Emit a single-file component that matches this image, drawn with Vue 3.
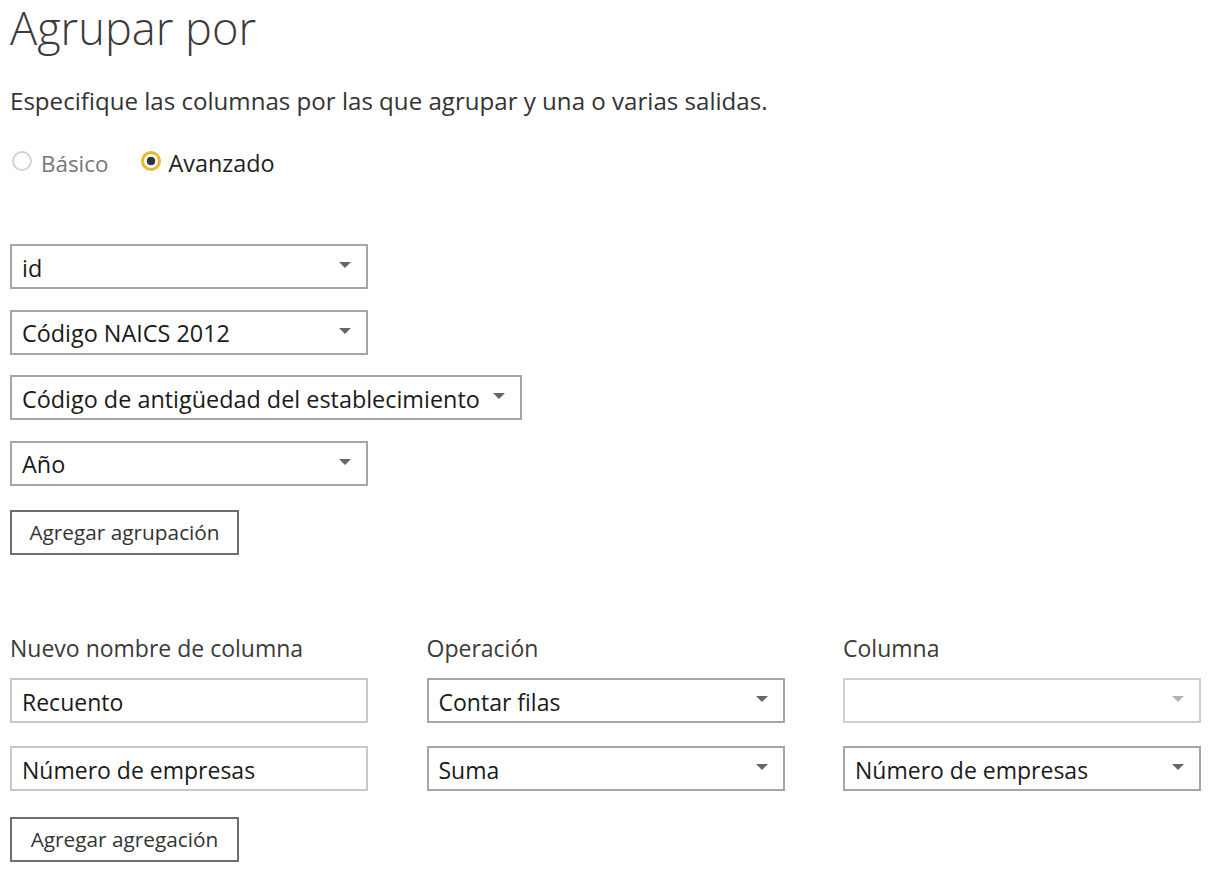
<template>
  <main class="page">
    <h1 class="title">Agrupar por</h1>
    <p class="subtitle">Especifique las columnas por las que agrupar y una o varias salidas.</p>

    <div class="mode">
      <label class="radio disabled">
        <span class="dot"></span>
        Básico
      </label>
      <label class="radio checked">
        <span class="dot"></span>
        Avanzado
      </label>
    </div>

    <div class="groups">
      <div
        v-for="item in groupings"
        :key="item"
        class="field select"
        :class="{ auto: item.length > 30 }"
      >
        <span>{{ item }}</span>
        <i class="caret"></i>
      </div>
      <button class="btn btn-group" type="button">Agregar agrupación</button>
    </div>

    <div class="aggregations">
      <div class="grid">
        <div class="label">Nuevo nombre de columna</div>
        <div class="label">Operación</div>
        <div class="label">Columna</div>

        <template v-for="row in rows" :key="row.name">
          <div class="field input">{{ row.name }}</div>
          <div class="field select"><span>{{ row.operation }}</span><i class="caret"></i></div>
          <div class="field select" :class="{ off: !row.column }">
            <span>{{ row.column }}</span>
            <i class="caret"></i>
          </div>
        </template>
      </div>
      <button class="btn btn-last" type="button">Agregar agregación</button>
    </div>
  </main>
</template>

<script setup>
const groupings = [
  'id',
  'Código NAICS 2012',
  'Código de antigüedad del establecimiento',
  'Año',
];

const rows = [
  { name: 'Recuento', operation: 'Contar filas', column: '' },
  { name: 'Número de empresas', operation: 'Suma', column: 'Número de empresas' },
];
</script>

<style>
body {
  background: #fff;
}
</style>

<style scoped>
.page {
  box-sizing: border-box;
  width: 1216px;
  height: 876px;
  padding: 0 15px 0 10px;
  font-family: "Open Sans", "Noto Sans", sans-serif;
  color: #1f1f1f;
}

.title {
  margin: 0;
  height: 56px;
  font-size: 45.2px;
  line-height: 56px;
  font-weight: 300;
  color: #3b3a39;
}

.subtitle {
  margin: 29px 0 0;
  font-size: 24.1px;
  line-height: 32px;
  color: #333;
}

.mode {
  display: flex;
  gap: 33px;
  margin-top: 30px;
  height: 32px;
  padding-left: 2px;
}

.radio {
  display: flex;
  align-items: center;
  gap: 9px;
  font-size: 22.4px;
}

.radio.disabled {
  color: #777;
}

.radio.checked {
  gap: 7px;
  font-size: 23.4px;
}

.dot {
  box-sizing: border-box;
  width: 20px;
  height: 20px;
  margin-top: -4px;
  border-radius: 50%;
  border: 2px solid #d2d2d2;
  background: #fff;
}

.checked .dot {
  border: 3px solid #e8b92f;
  background: radial-gradient(circle, #33343b 0 4px, #fff 4.6px);
}

.groups {
  display: flex;
  flex-direction: column;
  align-items: flex-start;
  gap: 20.5px;
  margin-top: 65px;
}

.groups .field {
  font-size: 23.4px;
}

.field {
  box-sizing: border-box;
  display: flex;
  align-items: center;
  width: 358px;
  height: 45px;
  padding: 2px 10px 0;
  border: 2px solid #a6a6a6;
  font-size: 23px;
  color: #1a1a1a;
  background: #fff;
}

.select {
  justify-content: space-between;
}

.select.auto {
  width: 512px;
}

.input {
  border-color: #c8c8c8;
}

.off {
  border-color: #cfcfcf;
}

.off .caret {
  border-top-color: #b3b3b3;
}

.caret {
  width: 0;
  height: 0;
  margin: -5px 5px 0 0;
  border-left: 6px solid transparent;
  border-right: 6px solid transparent;
  border-top: 6px solid #666;
}

.btn {
  box-sizing: border-box;
  width: 229px;
  height: 45px;
  padding: 0 0 2px;
  border: 2px solid #6e6e6e;
  background: #fff;
  font-family: inherit;
  font-size: 20.8px;
  color: #333;
}

.btn-group {
  margin-top: 4px;
}

.aggregations {
  margin-top: 75px;
}

.grid {
  display: grid;
  grid-template-columns: 358px 358px 358px;
  column-gap: 58.5px;
  row-gap: 23px;
}

.label {
  height: 36px;
  margin-bottom: -11px;
  font-size: 23px;
  line-height: 36px;
  color: #3b3a39;
}

.btn-last {
  margin-top: 26px;
}
</style>
